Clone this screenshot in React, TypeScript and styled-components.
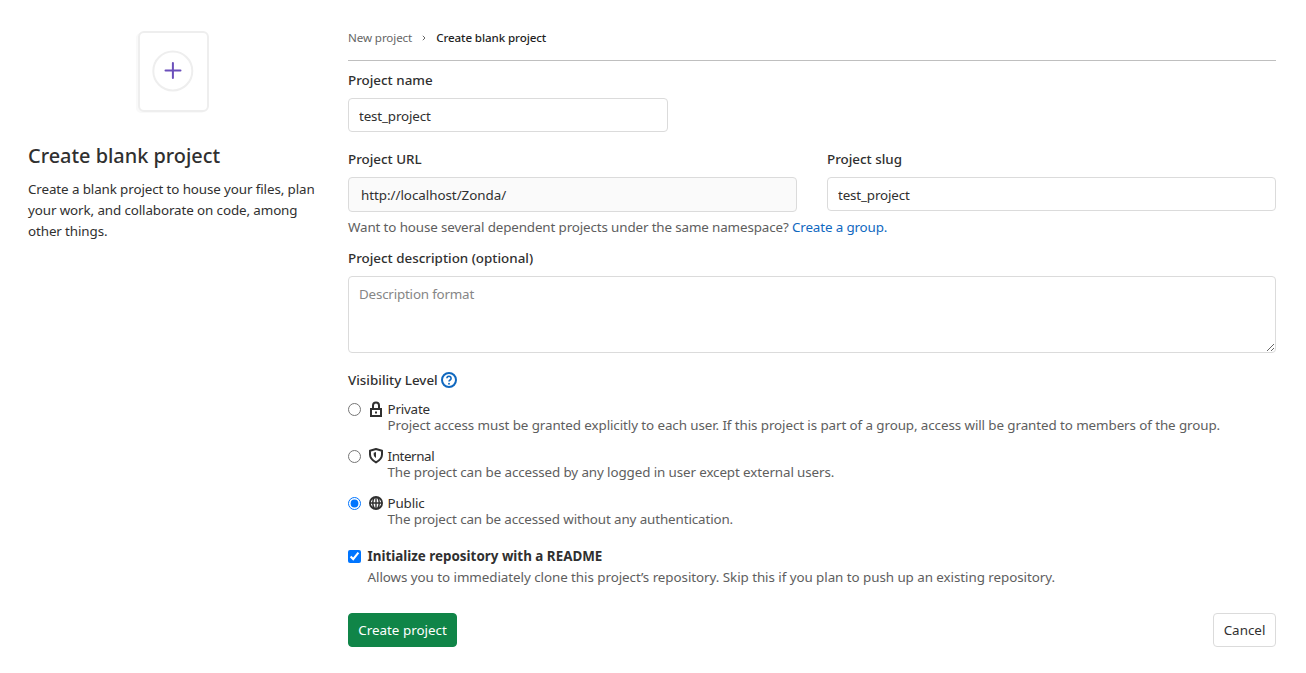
import React from "react";
import styled, { createGlobalStyle } from "styled-components";

const GlobalStyle = createGlobalStyle`
  *, *::before, *::after { box-sizing: border-box; }
  body {
    margin: 0;
    background: #fff;
    color: #303030;
    font-family: "Segoe UI", "Noto Sans", "Open Sans", sans-serif;
    font-size: 13.4px;
    line-height: 20px;
  }
`;

const Page = styled.div`
  display: flex;
  gap: 30px;
  width: 1306px;
  height: 673px;
  padding: 28px 30px 0 28px;
  overflow: hidden;
`;

const Aside = styled.aside`
  flex: 0 0 290px;
  min-width: 0;
  display: flex;
  flex-direction: column;
`;

const Illustration = styled.svg`
  display: block;
  align-self: center;
  width: 80px;
  height: 90px;
`;

const Title = styled.h1`
  margin: 24px 0 8px;
  font-size: 19.9px;
  font-weight: 500;
  line-height: 28px;
  padding-bottom: 1px;
  white-space: nowrap;
`;

const Lead = styled.p`
  margin: 0;
  line-height: 21px;
  letter-spacing: -0.11px;
  white-space: nowrap;
`;

const Main = styled.main`
  flex: 1;
  min-width: 0;
`;

const Breadcrumb = styled.nav`
  display: flex;
  align-items: center;
  height: 33px;
  padding-bottom: 13px;
  border-bottom: 1px solid #bfbfbf;
  font-size: 11.6px;
  letter-spacing: -0.1px;
  color: #666;
`;

const Chevron = styled.svg`
  width: 4px;
  height: 6px;
  margin: 0 10px;
`;

const Current = styled.span`
  color: #1f1f1f;
  font-weight: 500;
`;

const Label = styled.label<{ $top: number }>`
  display: flex;
  align-items: center;
  height: 20px;
  margin: ${(p) => p.$top}px 0 8px;
  font-weight: 500;
  white-space: nowrap;
`;

const Input = styled.input<{ $width: string }>`
  display: block;
  width: ${(p) => p.$width};
  height: 34px;
  padding: 2px 10px 0;
  border: 1px solid #dbdbdb;
  border-radius: 4px;
  background: #fff;
  color: #303030;
  font: inherit;
  letter-spacing: -0.15px;
  outline: none;
`;

const Columns = styled.div`
  display: grid;
  grid-template-columns: 449px 449px;
  column-gap: 30px;
  height: 80px;
`;

const Namespace = styled.div`
  height: 35px;
  padding: 0 12px;
  border: 1px solid #dbdbdb;
  border-radius: 4px;
  background: #fafafa;
  line-height: 34px;
  letter-spacing: -0.04px;
`;

const Hint = styled.p`
  margin: 5px 0 0;
  color: #5e5e5e;
  letter-spacing: -0.133px;
  white-space: nowrap;
`;

const Link = styled.a`
  color: #1068bf;
  text-decoration: none;
`;

const Description = styled.textarea`
  display: block;
  width: 100%;
  height: 77px;
  padding: 7px 10px;
  border: 1px solid #dbdbdb;
  border-radius: 4px;
  font: inherit;
  letter-spacing: -0.2px;
  outline: none;
  &::placeholder { color: #868686; opacity: 1; }
`;

const HelpIcon = styled.svg`
  width: 16px;
  height: 16px;
  margin-left: 3px;
`;

const Levels = styled.div`
  display: flex;
  flex-direction: column;
  gap: 15px;
  margin-top: 11px;
`;

const Level = styled.label`
  display: grid;
  grid-template-columns: 20px 19.5px 1fr;
  height: 32px;
  line-height: 16px;
`;

const Mark = styled.input`
  width: 13px;
  height: 13px;
  margin: 2px 0 0;
`;

const LevelIcon = styled.svg`
  width: 16px;
  height: 16px;
`;

const LevelText = styled.div`
  display: flex;
  flex-direction: column;
  white-space: nowrap;
`;

const Name = styled.span<{ $spacing: number }>`
  letter-spacing: ${(p) => p.$spacing}px;
`;

const Muted = styled.span<{ $spacing: number }>`
  color: #5e5e5e;
  letter-spacing: ${(p) => p.$spacing}px;
`;

const Readme = styled.label`
  display: grid;
  grid-template-columns: 19.5px 1fr;
  margin-top: 19px;
  height: 42px;
  line-height: 21px;
  white-space: nowrap;
  ${Mark} { margin-top: 4px; }
`;

const Actions = styled.div`
  display: flex;
  justify-content: space-between;
  margin-top: 25px;
`;

const Button = styled.button<{ $primary?: boolean; $width: number }>`
  width: ${(p) => p.$width}px;
  height: 34px;
  padding: 0 0 1px;
  border: 1px solid ${(p) => (p.$primary ? "#108548" : "#dbdbdb")};
  border-radius: 4px;
  background: ${(p) => (p.$primary ? "#108548" : "#fff")};
  color: ${(p) => (p.$primary ? "#fff" : "#303030")};
  font: inherit;
  white-space: nowrap;
`;

const Lock = () => (
  <LevelIcon viewBox="0 0 16 16" fill="none" stroke="#303030" strokeWidth="2">
    <rect x="3" y="8" width="10" height="7" />
    <path d="M5 8V4.5a3 3 0 0 1 6 0V8" />
    <rect x="7" y="10.5" width="2" height="2" fill="#303030" stroke="none" />
  </LevelIcon>
);

const Shield = () => (
  <LevelIcon viewBox="0 0 16 16">
    <path
      d="M8 1 14 2.8V6.5C14 9.8 11.800 12.300 8 14.400 4.200 12.300 2 9.800 2 6.500V2.800Z"
      fill="none"
      stroke="#303030"
      strokeWidth="2"
      strokeLinejoin="round"
    />
    <path d="M8 4v6C6.600 9 5.700 8 5.700 6.500V4.800Z" fill="#303030" />
  </LevelIcon>
);

const Globe = () => (
  <LevelIcon viewBox="0 0 16 16">
    <circle cx="8" cy="8" r="7" fill="#303030" />
    <g fill="#fff">
      <path d="M7.300 3v4.200H5.600C5.700 5.300 6.300 3.600 7.300 3Z" />
      <path d="M8.700 3v4.200h1.700C10.300 5.300 9.700 3.600 8.700 3Z" />
      <path d="M7.300 13V8.800H5.600C5.700 10.700 6.300 12.400 7.300 13Z" />
      <path d="M8.700 13V8.800h1.700C10.300 10.700 9.700 12.400 8.700 13Z" />
      <path d="M4.900 4.200C4.400 5 4.200 6 4.100 7.200H2.900C3 6 3.800 4.900 4.900 4.200Z" />
      <path d="M11.100 4.200C11.600 5 11.800 6 11.900 7.200h1.200C13 6 12.200 4.900 11.100 4.200Z" />
      <path d="M4.900 11.800C4.400 11 4.200 10 4.100 8.800H2.900C3 10 3.800 11.100 4.900 11.800Z" />
      <path d="M11.100 11.800C11.600 11 11.800 10 11.900 8.800h1.200C13 10 12.200 11.100 11.100 11.800Z" />
    </g>
  </LevelIcon>
);

const levels = [
  {
    name: "Private",
    icon: <Lock />,
    text: "Project access must be granted explicitly to each user. If this project is part of a group, access will be granted to members of the group.",
    nameSpacing: -0.2,
    textSpacing: -0.091,
  },
  {
    name: "Internal",
    icon: <Shield />,
    text: "The project can be accessed by any logged in user except external users.",
    nameSpacing: -0.4,
    textSpacing: -0.11,
  },
  {
    name: "Public",
    icon: <Globe />,
    text: "The project can be accessed without any authentication.",
    nameSpacing: -0.15,
    textSpacing: -0.12,
  },
];

export default function App() {
  return (
    <>
      <GlobalStyle />
      <Page>
        <Aside>
          <Illustration viewBox="0 0 80 90">
            <rect x="3" y="5" width="70" height="80" rx="5" fill="#f9f9f9" />
            <rect x="6" y="4" width="69" height="79" rx="5" fill="#fff" stroke="#eee" strokeWidth="2" />
            <circle cx="39.800" cy="43" r="19.500" fill="#fff" stroke="#eee" strokeWidth="2" />
            <path d="M32.500 42.500h15M39.900 35v15" stroke="#6b4fbb" strokeWidth="2" strokeLinecap="round" />
          </Illustration>
          <Title>Create blank project</Title>
          <Lead>
            Create a blank project to house your files, plan
            <br />
            your work, and collaborate on code, among
            <br />
            other things.
          </Lead>
        </Aside>
        <Main>
          <Breadcrumb>
            <span>New project</span>
            <Chevron viewBox="0 0 4 6" fill="none" stroke="#666" strokeWidth="1">
              <path d="M.8.800 3 3 .8 5.200" />
            </Chevron>
            <Current>Create blank project</Current>
          </Breadcrumb>
          <Label $top={9}>Project name</Label>
          <Input $width="320px" defaultValue="test_project" />
          <Columns>
            <div>
              <Label $top={17}>Project URL</Label>
              <Namespace>http://localhost/Zonda/</Namespace>
            </div>
            <div>
              <Label $top={17}>Project slug</Label>
              <Input $width="100%" defaultValue="test_project" />
            </div>
          </Columns>
          <Hint>
            Want to house several dependent projects under the same namespace?{" "}
            <Link>Create a group.</Link>
          </Hint>
          <Label $top={11}>Project description (optional)</Label>
          <Description placeholder="Description format" />
          <Label as="div" $top={17}>
            Visibility Level
            <HelpIcon viewBox="0 0 16 16" fill="none" stroke="#1068bf">
              <circle cx="8" cy="8" r="7" strokeWidth="2" />
              <path d="M5.900 6.300a2.100 2 0 1 1 3.200 1.700C8.300 8.500 8 8.700 8 9.600" strokeWidth="1.600" />
              <circle cx="8" cy="11.700" r=".95" fill="#1068bf" stroke="none" />
            </HelpIcon>
          </Label>
          <Levels>
            {levels.map((level) => (
              <Level key={level.name}>
                <Mark type="radio" name="visibility" defaultChecked={level.name === "Public"} />
                {level.icon}
                <LevelText>
                  <Name $spacing={level.nameSpacing}>{level.name}</Name>
                  <Muted $spacing={level.textSpacing}>{level.text}</Muted>
                </LevelText>
              </Level>
            ))}
          </Levels>
          <Readme>
            <Mark type="checkbox" defaultChecked />
            <LevelText>
              <b>Initialize repository with a README</b>
              <Muted $spacing={-0.06}>
                Allows you to immediately clone this project’s repository. Skip this if you plan to push up an existing repository.
              </Muted>
            </LevelText>
          </Readme>
          <Actions>
            <Button $primary $width={109}>Create project</Button>
            <Button $width={63}>Cancel</Button>
          </Actions>
        </Main>
      </Page>
    </>
  );
}
